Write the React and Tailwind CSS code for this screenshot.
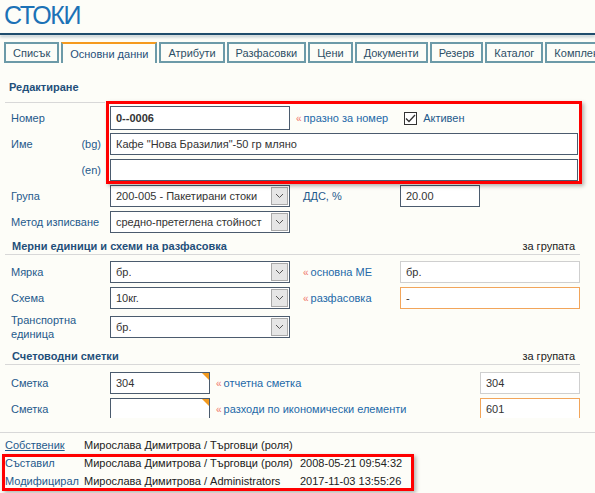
import React from "react";

const TABS = ["Списък", "Основни данни", "Атрибути", "Разфасовки", "Цени", "Документи", "Резерв", "Каталог", "Комплект"];

const Chevron = () => (
  <span className="flex h-[18px] w-[17px] items-center justify-center border border-[#a9a9a9] bg-[#e6e6e6]">
    <svg width="9" height="6" viewBox="0 0 9 6">
      <path d="M1 1 L4.5 4.5 L8 1" fill="none" stroke="#555" strokeWidth="1" />
    </svg>
  </span>
);

const Select = ({ value }) => (
  <div className="flex h-[22px] w-[180px] items-center justify-between border border-[#4b5b6e] bg-white pl-[5px] pr-px text-[#333]">
    <span className="truncate">{value}</span>
    <Chevron />
  </div>
);

const Input = ({ value, w, h = "h-[22px]", border = "border-[#4b5b6e]", bold, corner }) => (
  <div className={`${w} ${h} relative flex shrink-0 items-center border ${border} bg-white px-[5px] text-[#333] ${bold ? "font-bold" : ""}`}>
    {value}
    {corner && (
      <span className="absolute right-0 top-0 h-0 w-0 border-l-[7px] border-t-[7px] border-l-transparent border-t-[#f39a1e]" />
    )}
  </div>
);

const Hint = ({ children }) => (
  <span className="whitespace-nowrap text-[#2369a8]">
    <span className="mr-[2px] text-[10px] text-[#f0766b]">«</span>
    {children}
  </span>
);

const Row = ({ label, sub, children, h = "h-[26px]" }) => (
  <div className={`flex items-center ${h}`}>
    <div className="flex w-[110px] shrink-0 items-center justify-between whitespace-nowrap pl-[11px] pr-[9px] text-[#1f5a8c]">
      <span className="leading-[14px]">{label}</span>
      {sub && <span>{sub}</span>}
    </div>
    {children}
  </div>
);

const Section = ({ title, right, mt }) => (
  <div className={`ml-[5px] mr-[15px] ${mt} flex h-[16px] items-start justify-between border-b border-[#d8d8d8] pl-[7px] leading-[14px]`}>
    <span className="font-bold text-[#1f4f7a]">{title}</span>
    {right && <span className="pr-[5px] text-[#222]">{right}</span>}
  </div>
);

export default function App() {
  return (
    <div className="relative h-[493px] w-[595px] overflow-hidden bg-[#fdfdf8] text-[11px] leading-[14px] font-['Liberation_Sans',Arial,sans-serif]">
      <div className="h-[33px] pl-[4px] pt-[1px] text-[25px] leading-[28px] tracking-[-1.5px] text-[#1c72b6]">СТОКИ</div>
      <div className="h-[2px] bg-[#1f4d6d] shadow-[0_2px_3px_rgba(31,77,109,0.35)]" />

      <div className="mt-[7px] flex gap-[2px] pl-[4px] whitespace-nowrap">
        {TABS.map((t, i) =>
          i === 1 ? (
            <div key={t} className="flex h-[21px] items-center border-x-2 border-t-2 border-x-[#6c9aa8] border-t-[#f59a1e] bg-[#fdfdf8] px-[7px] text-[#1f4f7a]">
              {t}
            </div>
          ) : (
            <div key={t} className="flex h-[21px] items-center border-2 border-[#6c9aa8] px-[7px] text-[#2d4f66]">
              {t}
            </div>
          )
        )}
      </div>

      <div className="ml-[9px] mt-[17px] font-bold text-[#1f4f7a]">Редактиране</div>
      <div className="ml-[5px] mt-[8px] h-px w-[100px] bg-[#d8d8d8]" />

      <div className="mt-[2px]">
        <Row label="Номер">
          <Input value="0--0006" w="w-[180px]" h="h-[24px]" bold />
          <span className="ml-[6px]"><Hint>празно за номер</Hint></span>
          <span className="ml-[16px] flex items-center text-[#1f5a8c]">
            <span className="mr-[6px] flex h-[13px] w-[13px] items-center justify-center border border-[#333] bg-white">
              <svg width="11" height="9" viewBox="0 0 11 9">
                <path d="M1 4.5 L4 7.5 L10 1" fill="none" stroke="#333" strokeWidth="1.3" />
              </svg>
            </span>
            Активен
          </span>
        </Row>
        <Row label="Име" sub="(bg)">
          <Input value={'Кафе "Нова Бразилия"-50 гр мляно'} w="w-[468px]" />
        </Row>
        <Row sub="(en)">
          <Input value="" w="w-[468px]" />
        </Row>
        <Row label="Група">
          <Select value="200-005 - Пакетирани стоки" />
          <span className="ml-[13px] w-[97px] text-[#1f5a8c]">ДДС, %</span>
          <Input value="20.00" w="w-[80px]" />
        </Row>
        <Row label="Метод изписване">
          <Select value="средно-претеглена стойност" />
        </Row>
      </div>

      <Section title="Мерни единици и схеми на разфасовка" right="за групата" mt="mt-[4px]" />
      <div className="mt-[4px]">
        <Row label="Мярка">
          <Select value="бр." />
          <span className="ml-[13px] w-[97px]"><Hint>основна МЕ</Hint></span>
          <Input value="бр." w="w-[180px]" border="border-[#cfcfcf]" />
        </Row>
        <Row label="Схема">
          <Select value="10кг." />
          <span className="ml-[13px] w-[97px]"><Hint>разфасовка</Hint></span>
          <Input value="-" w="w-[180px]" border="border-[#f2a55a]" />
        </Row>
        <Row label={<>Транспортна<br />единица</>} h="h-[32px]">
          <Select value="бр." />
        </Row>
      </div>

      <Section title="Счетоводни сметки" right="за групата" mt="mt-[6px]" />
      <div className="mt-[5px] h-[48px] overflow-hidden">
        <Row label="Сметка">
          <Input value="304" w="w-[100px]" corner />
          <span className="ml-[6px] w-[264px]"><Hint>отчетна сметка</Hint></span>
          <Input value="304" w="w-[100px]" border="border-[#cfcfcf]" />
        </Row>
        <Row label="Сметка">
          <Input value="" w="w-[100px]" corner />
          <span className="ml-[6px] w-[264px]"><Hint>разходи по икономически елементи</Hint></span>
          <Input value="601" w="w-[100px]" border="border-[#f2a55a]" />
        </Row>
      </div>

      <div className="mt-[14px] h-px bg-[#d8d8d8]" />
      <div className="mt-[3px] pl-[5px] leading-[18px] text-[#222]">
        <div className="flex">
          <span className="w-[79px] text-[#1f5a8c] underline">Собственик</span>
          <span>Мирослава Димитрова / Търговци (роля)</span>
        </div>
        <div className="flex">
          <span className="w-[79px] text-[#1f5a8c]">Съставил</span>
          <span className="w-[216px]">Мирослава Димитрова / Търговци (роля)</span>
          <span>2008-05-21 09:54:32</span>
        </div>
        <div className="flex">
          <span className="w-[79px] text-[#1f5a8c]">Модифицирал</span>
          <span className="w-[216px]">Мирослава Димитрова / Administrators</span>
          <span>2017-11-03 13:55:26</span>
        </div>
      </div>

      <div className="pointer-events-none absolute left-[106px] top-[101px] h-[83px] w-[476px] border-[3px] border-[#f00] shadow-[2px_2px_4px_rgba(0,0,0,0.3)]" />
      <div className="pointer-events-none absolute left-[2px] top-[454px] h-[37px] w-[412px] border-[3px] border-[#f00] shadow-[2px_2px_4px_rgba(0,0,0,0.3)]" />
    </div>
  );
}
